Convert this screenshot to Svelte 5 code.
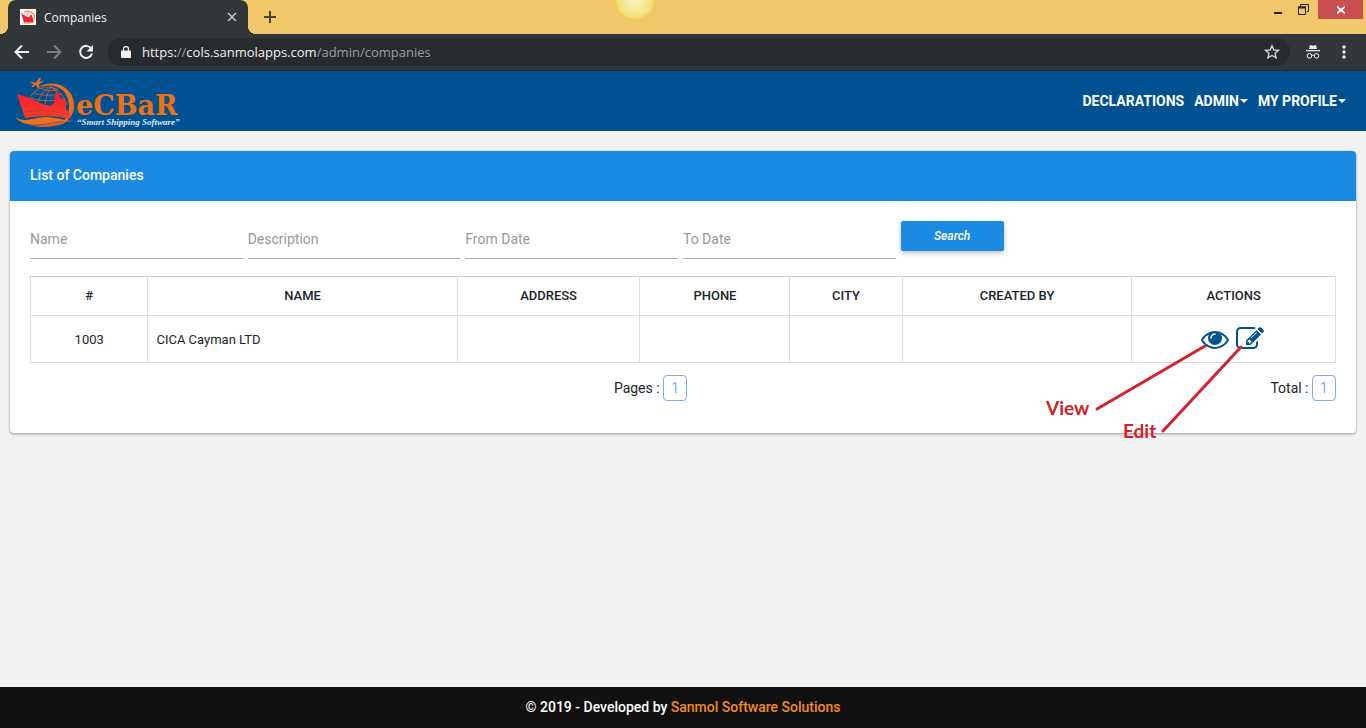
<script lang="ts">
  interface Company {
    id: number;
    name: string;
    address: string;
    phone: string;
    city: string;
    createdBy: string;
  }

  const columns = ['#', 'Name', 'Address', 'Phone', 'City', 'Created By', 'Actions'];

  const filters = [
    { id: 'name', label: 'Name' },
    { id: 'description', label: 'Description' },
    { id: 'from', label: 'From Date' },
    { id: 'to', label: 'To Date' },
  ];

  const companies: Company[] = [
    { id: 1003, name: 'CICA Cayman LTD', address: '', phone: '', city: '', createdBy: '' },
  ];
</script>

<div class="screen">
  <header class="browser">
    <div class="tabstrip">
      <div class="tab">
        <svg class="favicon" viewBox="0 0 16 16" aria-hidden="true">
          <rect width="16" height="16" fill="#fff" />
          <path d="M4 3.5C8 .5 15 3 14.5 9c-.2 2-1 3.5-2.500 4.500" fill="none" stroke="#f0914f" stroke-width="1.2" />
          <path d="M5 6c1-3 6-4 7.500 0M7 7q1-4 3-4" fill="none" stroke="#f4b49a" />
          <path d="M1 4l6 4 2 .5L11 5l2 4v4l-9 .5z" fill="#f0212c" />
          <path d="M1 13c4 2 7-.5 13 .5-4 .5-8 2.500-13-.5z" fill="#ef6c2b" />
        </svg>
        <span class="tab-title">Companies</span>
        <button class="icon-btn" aria-label="Close tab">
          <svg width="10" height="10" viewBox="0 0 10 10"><path d="M1 1l8 8M9 1l-8 8" stroke="#c6c8ca" stroke-width="1.5" /></svg>
        </button>
      </div>
      <button class="icon-btn new-tab" aria-label="New tab">
        <svg width="12" height="12" viewBox="0 0 12 12"><path d="M6 0v12M0 6h12" stroke="#4a4435" stroke-width="2" /></svg>
      </button>
      <span class="sun"></span>
      <div class="window-controls">
        <button class="icon-btn" aria-label="Minimize">
          <svg width="8" height="12" viewBox="0 0 8 12"><path d="M0 9h8" stroke="#222" stroke-width="2" /></svg>
        </button>
        <button class="icon-btn" aria-label="Restore">
          <svg width="11" height="11" viewBox="0 0 11 11" fill="none" stroke="#222"><path d="M2.5 2V.5h8v7H9" /><path d="M.5 3h7v7.500h-7z" /><path d="M0 3.500h8" stroke-width="2" /></svg>
        </button>
        <button class="icon-btn close" aria-label="Close window">
          <svg width="8" height="8" viewBox="0 0 8 8"><path d="M0 .5l8 7M8 .5l-8 7" stroke="#fff" stroke-width="1.7" /></svg>
        </button>
      </div>
    </div>

    <div class="toolbar">
      <button class="icon-btn" aria-label="Back">
        <svg width="16" height="16" viewBox="0 0 16 16" fill="none" stroke="#f1f1f1" stroke-width="2"><path d="M15 8H2M8 1.5L1.5 8 8 14.5" /></svg>
      </button>
      <button class="icon-btn" aria-label="Forward">
        <svg width="16" height="16" viewBox="0 0 16 16" fill="none" stroke="#7f8284" stroke-width="2"><path d="M1 8h13M8 1.5L14.5 8 8 14.5" /></svg>
      </button>
      <button class="icon-btn" aria-label="Reload">
        <svg width="16" height="16" viewBox="0 0 16 16"><path d="M13.2 4.500A6 6 0 1 0 14 9.500" fill="none" stroke="#f1f1f1" stroke-width="2" /><path d="M15 1v6.500H8.500z" fill="#f1f1f1" /></svg>
      </button>
      <div class="address">
        <svg width="10" height="12" viewBox="0 0 10 12" aria-hidden="true"><path d="M2.500 5V3a2.500 2.500 0 0 1 5 0v2" fill="none" stroke="#f1f1f1" stroke-width="1.3" /><rect y="4.500" width="10" height="7.500" rx="1" fill="#f1f1f1" /></svg>
        <span class="url">https:<i>//</i>cols.sanmolapps.com<i>/admin/companies</i></span>
        <button class="icon-btn" aria-label="Bookmark">
          <svg width="16" height="16" viewBox="0 0 16 16"><path d="M8 1.800l1.900 4.200 4.600.4-3.500 3 1.100 4.500L8 11.500l-4.100 2.400L5 9.400l-3.500-3 4.600-.4z" fill="none" stroke="#d0d1d2" stroke-width="1.4" /></svg>
        </button>
      </div>
      <svg class="incognito" width="14" height="14" viewBox="0 0 14 14" aria-hidden="true">
        <path d="M4 0l3 .7L10 0l1 4H3zM0 5h14v1.300H0z" fill="#f1f1f1" />
        <circle cx="3.5" cy="10.8" r="2.3" fill="none" stroke="#f1f1f1" />
        <circle cx="10.5" cy="10.8" r="2.3" fill="none" stroke="#f1f1f1" />
        <path d="M5.800 10.500q1.200-.8 2.400 0" fill="none" stroke="#f1f1f1" />
      </svg>
      <button class="icon-btn" aria-label="Menu">
        <svg width="4" height="14" viewBox="0 0 4 14" fill="#f1f1f1"><circle cx="2" cy="2" r="1.700" /><circle cx="2" cy="7" r="1.700" /><circle cx="2" cy="12" r="1.700" /></svg>
      </button>
    </div>
  </header>

  <nav class="navbar">
    <a class="brand" href="#home" aria-label="eCBaR home">
      <svg width="174" height="50" viewBox="0 0 174 50">
        <defs>
          <linearGradient id="hull" x1="0" y1="0" x2="0" y2="1">
            <stop offset="0" stop-color="#ff1a2a" />
            <stop offset="1" stop-color="#f5402a" />
          </linearGradient>
        </defs>
        <!-- globe -->
        <path d="M22 10C37 0 57 7 59 25c1 10-4 17-13 22 5-6 9-13 8-21C52 9 38 4 22 10z" fill="#ee6c1b" />
        <g fill="none" stroke="#d9622a" stroke-width=".8">
          <path d="M15 20C20 9 34 6 43 12M18 15q13 4 29 1M23 10q10 4 20 2M15 20q16 5 35 1M22 25q6-14 14-16M30 26q2-12 6-17M36 9q8 5 10 18M36 9q12 5 16 18" />
        </g>
        <!-- plane -->
        <path d="M14 4l7 .5L24 0l2 0-1.500 4 4-1.500-.5 1.500-4 2 .5 4-1.500 0-2-3-3 2-1.500 0 2-3z" fill="#ee6c1b" />
        <!-- ship -->
        <path d="M2 16l10 3 15 7 8 2 4-3 1-9 3-2 3 7 5 2v8l5 6-2 4c-11-3-26-4-44-1z" fill="url(#hull)" />
        <path d="M11 34c14-2 27-2 42 2M10 38c14-3 29-2 41 2" fill="none" stroke="#a93c40" stroke-width=".8" />
        <path d="M0 39c8 6 18 1 30 0 12 0 19 4 30 4-9 1-17 0-25 2-13 3-28 3-35-6z" fill="#f0701c" />
        <path d="M14 47c14 2 22-4 37-3-6 4-24 7-37 3z" fill="#ee5725" />
        <text class="logo-name" x="61" y="37">eCBaR</text>
        <text class="logo-tag" x="62" y="47">“Smart Shipping Software”</text>
      </svg>
    </a>
    <ul class="menu">
      <li><a href="#declarations">Declarations</a></li>
      <li><a href="#admin">Admin<span class="caret"></span></a></li>
      <li><a href="#profile">My Profile<span class="caret"></span></a></li>
    </ul>
  </nav>

  <main class="content">
    <section class="card">
      <h1 class="card-header">List of Companies</h1>
      <div class="card-body">
        <form class="filters" onsubmit={(e) => e.preventDefault()}>
          {#each filters as filter}
            <div class="field">
              <input id={filter.id} type="text" placeholder={filter.label} aria-label={filter.label} />
            </div>
          {/each}
          <div class="field">
            <button class="search" type="submit">Search</button>
          </div>
        </form>

        <table>
          <colgroup>
            <col class="w-id" />
            <col class="w-name" />
            <col class="w-address" />
            <col class="w-phone" />
            <col class="w-city" />
            <col class="w-created" />
            <col />
          </colgroup>
          <thead>
            <tr>
              {#each columns as column}
                <th scope="col">{column}</th>
              {/each}
            </tr>
          </thead>
          <tbody>
            {#each companies as company (company.id)}
              <tr>
                <td class="center">{company.id}</td>
                <td>{company.name}</td>
                <td>{company.address}</td>
                <td>{company.phone}</td>
                <td>{company.city}</td>
                <td>{company.createdBy}</td>
                <td class="center">
                  <div class="actions">
                    <a href="#view" aria-label="View">
                      <svg width="28" height="28" viewBox="0 0 1792 1792"><path d="M1664 960q-152-236-381-353 61 104 61 225 0 185-131.500 316.500t-316.500 131.500-316.500-131.500-131.500-316.500q0-121 61-225-229 117-381 353 133 205 333.500 326.500t434.500 121.500 434.500-121.500 333.500-326.500zm-720-384q0-20-14-34t-34-14q-125 0-214.500 89.500t-89.500 214.500q0 20 14 34t34 14 34-14 14-34q0-86 61-147t147-61q20 0 34-14t14-34zm848 384q0 34-20 69-140 230-376.500 368.500t-499.500 138.500-499.500-139-376.500-368q-20-35-20-69t20-69q140-229 376.500-368t499.500-139 499.500 139 376.500 368q20 35 20 69z" /></svg>
                    </a>
                    <a href="#edit" aria-label="Edit">
                      <svg width="28" height="28" viewBox="0 0 1792 1792"><path d="M888 1184l116-116-152-152-116 116v56h96v96h56zm440-720q-16-16-33 1l-350 350q-17 17-1 33t33-1l350-350q17-17 1-33zm80 594v190q0 119-84.500 203.500t-203.500 84.500h-832q-119 0-203.500-84.500t-84.500-203.500v-832q0-119 84.500-203.500t203.500-84.500h832q63 0 117 25 15 7 18 23 3 17-9 29l-49 49q-14 14-32 8-23-6-45-6h-832q-66 0-113 47t-47 113v832q0 66 47 113t113 47h832q66 0 113-47t47-113v-126q0-13 9-22l64-64q15-15 35-7t20 29zm-96-738l288 288-672 672h-288v-288zm444 132l-92 92-288-288 92-92q28-28 68-28t68 28l152 152q28 28 28 68t-28 68z" /></svg>
                    </a>
                    <svg class="callouts" width="220" height="118" viewBox="0 0 220 118">
                      <path d="M53 84L161 21M119 106L197 22" stroke="#d2232a" stroke-width="3" stroke-linecap="round" />
                      <text x="2" y="90">View</text>
                      <text x="79" y="113">Edit</text>
                    </svg>
                  </div>
                </td>
              </tr>
            {/each}
          </tbody>
        </table>

        <div class="summary">
          <span class="pages">Pages : <a class="badge" href="#page-1">1</a></span>
          <span class="total">Total : <span class="badge">{companies.length}</span></span>
        </div>
      </div>
    </section>
  </main>

  <footer>© 2019 - Developed by <a href="#sanmol">Sanmol Software Solutions</a></footer>
</div>

<style>
  :global(body) {
    background: #f2f2f2;
    font-family: Roboto, sans-serif;
    font-size: 14px;
    color: #212529;
  }

  .screen {
    display: flex;
    flex-direction: column;
    min-height: 100vh;
  }

  a {
    color: inherit;
    text-decoration: none;
  }

  svg {
    display: block;
  }

  .icon-btn {
    display: flex;
    align-items: center;
    justify-content: center;
    padding: 0;
    border: none;
    background: none;
    cursor: pointer;
  }

  /* browser window */
  .browser {
    font-family: 'Open Sans', 'Noto Sans', sans-serif;
    color: #f1f1f1;
  }

  .tabstrip {
    position: relative;
    display: flex;
    height: 34px;
    padding-left: 8px;
    background: #f0c869;
    overflow: hidden;
  }

  .tab {
    position: relative;
    display: flex;
    align-items: center;
    gap: 8px;
    box-sizing: border-box;
    width: 240px;
    padding: 0 11px 0 12px;
    background: #323639;
    border-radius: 8px 8px 0 0;
    font-size: 12px;
  }

  .tab::before, .tab::after {
    content: '';
    position: absolute;
    bottom: 0;
    width: 8px;
    height: 8px;
  }

  .tab::before {
    left: -8px;
    background: radial-gradient(circle at 0 0, transparent 8px, #323639 8px);
  }

  .tab::after {
    right: -8px;
    background: radial-gradient(circle at 100% 0, transparent 8px, #323639 8px);
  }

  .favicon {
    width: 16px;
    height: 16px;
  }

  .tab-title {
    flex: 1;
  }

  .new-tab {
    width: 44px;
  }

  .sun {
    position: absolute;
    top: -20px;
    left: 45%;
    width: 40px;
    height: 40px;
    border-radius: 50%;
    background: radial-gradient(circle, #f8eeb0 20%, #f5e07a 60%, #f1cc45 72%);
  }

  .window-controls {
    display: flex;
    align-items: flex-start;
    gap: 16px;
    margin-left: auto;
    padding-right: 3px;
  }

  .window-controls .icon-btn {
    height: 19px;
  }

  .window-controls .close {
    width: 45px;
    margin-left: -7px;
    background: #c94f50;
  }

  .toolbar {
    display: flex;
    align-items: center;
    gap: 16px;
    height: 36px;
    padding: 0 20px 0 14px;
    background: #323639;
    border-bottom: 1px solid #1d2b38;
  }

  .address {
    display: flex;
    align-items: center;
    flex: 1;
    gap: 11px;
    height: 28px;
    margin-left: -2px;
    padding: 0 10px 0 13px;
    background: #282b2e;
    border-radius: 14px;
    font-size: 13px;
  }

  .url {
    flex: 1;
  }

  .url i {
    color: #9aa0a3;
    font-style: normal;
  }

  .incognito {
    margin-right: 6px;
  }

  /* application */
  .navbar {
    display: flex;
    align-items: center;
    justify-content: space-between;
    height: 60px;
    padding: 0 20px 0 15px;
    background: #005191;
  }

  .brand {
    padding-top: 4px;
  }

  .logo-name {
    font: bold 27px 'DejaVu Serif', serif;
    fill: #ef7010;
  }

  .logo-tag {
    font: italic bold 9px 'Liberation Serif', serif;
    fill: #dbe9f5;
  }

  .menu {
    display: flex;
    gap: 10px;
    margin: 0;
    padding: 0;
    list-style: none;
    color: #fff;
    font-weight: 700;
    text-transform: uppercase;
  }

  .menu a {
    display: flex;
    align-items: center;
    gap: 1px;
  }

  .caret {
    border-top: 4px solid;
    border-left: 4px solid transparent;
    border-right: 4px solid transparent;
  }

  .content {
    flex: 1;
    padding: 20px 10px;
  }

  .card {
    background: #fff;
    border-radius: 4px;
    box-shadow: 0 1px 3px rgba(0, 0, 0, 0.4);
  }

  .card-header {
    margin: 0;
    padding: 14px 20px 16px;
    background: #1a8ae2;
    border-radius: 4px 4px 0 0;
    color: #fff;
    font-size: 14px;
    font-weight: 500;
    line-height: 20px;
  }

  .card-body {
    padding: 20px 20px 32px;
  }

  .filters {
    display: flex;
    margin-bottom: 17px;
  }

  .field {
    box-sizing: border-box;
    width: calc(100% / 6);
    padding-right: 5px;
  }

  .field input {
    box-sizing: border-box;
    width: 100%;
    height: 38px;
    padding: 0 0 2px;
    border: none;
    border-bottom: 1px solid #aaa;
    background: none;
    font: 14px Roboto, sans-serif;
    outline: none;
  }

  .field input::placeholder {
    color: #999;
  }

  .search {
    width: 103px;
    height: 30px;
    border: none;
    border-radius: 2px;
    background: #1a8ae2;
    box-shadow: 0 2px 5px rgba(0, 0, 0, 0.26);
    color: #fff;
    font: italic 500 12px Roboto, sans-serif;
    cursor: pointer;
  }

  table {
    width: 100%;
    border-collapse: collapse;
    table-layout: fixed;
    font-size: 13px;
  }

  .w-id { width: 9%; }
  .w-name { width: 23.7%; }
  .w-address { width: 14%; }
  .w-phone { width: 11.5%; }
  .w-city { width: 8.6%; }
  .w-created { width: 17.6%; }

  th, td {
    box-sizing: border-box;
    padding: 0 8px;
    border: 1px solid #ddd;
    text-align: left;
  }

  th {
    height: 39px;
    padding-bottom: 2px;
    border-top-color: #ccc;
    font-size: 13px;
    font-weight: 500;
    text-align: center;
    text-transform: uppercase;
  }

  td {
    height: 47px;
  }

  .center {
    text-align: center;
  }

  .actions {
    position: relative;
    display: inline-flex;
    gap: 7px;
    margin-right: 2px;
    vertical-align: middle;
    fill: #005191;
  }

  .callouts {
    position: absolute;
    top: 0;
    right: 0;
    pointer-events: none;
  }

  .callouts text {
    fill: #d2232a;
    font: bold 19px Lato, sans-serif;
  }

  .summary {
    display: grid;
    grid-template-columns: 1fr auto 1fr;
    margin-top: 12px;
  }

  .pages {
    grid-column: 2;
    margin-right: 65px;
  }

  .total {
    justify-self: end;
  }

  .badge {
    display: inline-block;
    box-sizing: border-box;
    width: 24px;
    border: 1px solid #7eaee0;
    border-radius: 4px;
    color: #7eaee0;
    line-height: 24px;
    text-align: center;
  }

  footer {
    padding: 10px;
    background: #111;
    color: #fff;
    font-weight: 500;
    line-height: 21px;
    text-align: center;
  }

  footer a {
    color: #f58a1f;
  }
</style>
